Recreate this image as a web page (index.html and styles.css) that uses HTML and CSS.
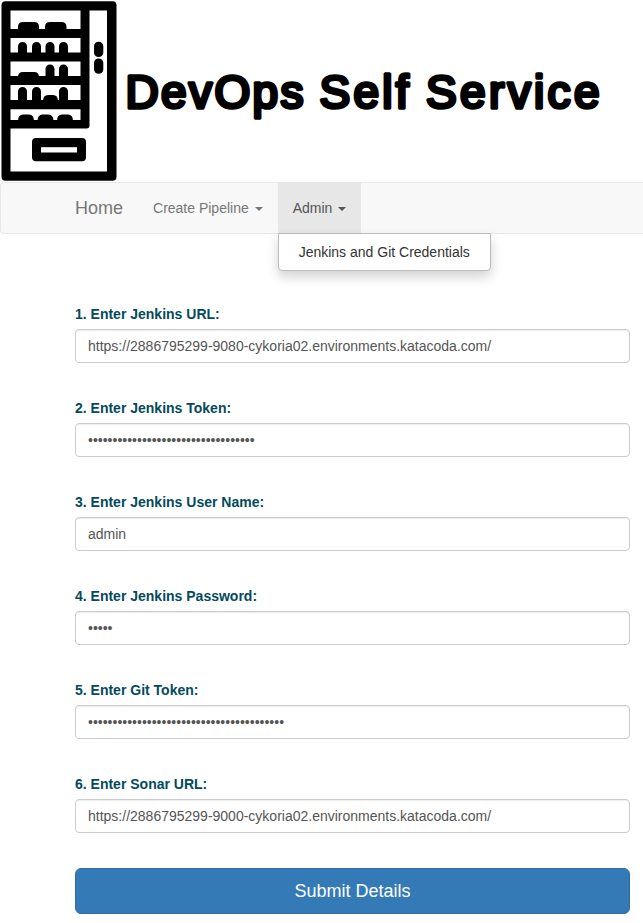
FILE: index.html
```html
<!DOCTYPE html>
<html lang="en">
<head>
<meta charset="utf-8">
<title>DevOps Self Service</title>
<link rel="stylesheet" href="styles.css">
</head>
<body>
<header class="banner">
  <svg class="banner-art" width="643" height="182" viewBox="0 0 643 182" role="img" aria-label="DevOps Self Service">
    <rect x="1.5" y="1.2" width="115" height="179.6" rx="4"/>
    <path class="hole" d="M89.5 10.5H107V171.5H10.5V128.5H86.5Q89.5 128.5 89.5 125.5Z"/>
    <path class="hole" d="M10.5 10.5h70V29h-70zM10.5 38h70v14.5h-70zM10.5 61.5h70V76h-70zM10.5 85h70v15h-70zM10.5 109.3h70V120h-70z"/>
    <path d="M18 30v-3q0-5 5-5h11q5 0 5 5v3zM45 30v-3q0-5 5-5h11.500q5 0 5 5v3z"/>
    <path d="M18 53v-6.500a4.500 4.500 0 0 1 9 0V53zM32 53v-6.500a4.500 4.500 0 0 1 9 0V53zM45.500 53v-6.500a4.500 4.500 0 0 1 9 0V53zM59 53v-6.500a4.500 4.500 0 0 1 9 0V53z"/>
    <path d="M18 77q0-5 5-5h11q5 0 5 5zM45.500 77v-8a4.500 4.500 0 0 1 9 0v8zM59 77v-8a4.500 4.500 0 0 1 9 0v8z"/>
    <path d="M18 101v-9.500a4.500 4.500 0 0 1 9 0v9.500zM32 101v-9.500a4.500 4.500 0 0 1 9 0v9.500zM43 101q0-6 5-6h5q5 0 5 6zM59 101v-9.500a4.500 4.500 0 0 1 9 0v9.500z"/>
    <path d="M18 121q0-6.500 5-6.500h6q5 0 5 6.500zM37.500 121q0-6.500 5-6.500h6q5 0 5 6.500zM57 121q0-6.500 5-6.500h6q5 0 5 6.500z"/>
    <rect x="94" y="41.700" width="9.300" height="15.300" rx="4.600"/>
    <rect x="94" y="58.500" width="9.300" height="15.300" rx="4.600"/>
    <rect x="32" y="138" width="54" height="23.300" rx="4"/>
    <rect class="hole" x="41" y="147.200" width="36" height="5.300"/>
    <g class="banner-title">
      <text x="125.500" y="108" textLength="178" lengthAdjust="spacing">DevOps</text>
      <text x="319.500" y="108" textLength="89" lengthAdjust="spacing">Self</text>
      <text x="426" y="108" textLength="173.500" lengthAdjust="spacing">Service</text>
    </g>
  </svg>
</header>
<nav class="navbar">
  <a class="brand">Home</a>
  <a class="nav-link">Create Pipeline <i class="caret"></i></a>
  <div class="nav-item">
    <a class="nav-link open">Admin <i class="caret"></i></a>
    <div class="menu"><a>Jenkins and Git Credentials</a></div>
  </div>
</nav>
<form class="form">
  <label for="f1">1. Enter Jenkins URL:</label>
  <input id="f1" type="text" value="https://2886795299-9080-cykoria02.environments.katacoda.com/">
  <label for="f2">2. Enter Jenkins Token:</label>
  <input id="f2" type="password" value="0000000000000000000000000000000000">
  <label for="f3">3. Enter Jenkins User Name:</label>
  <input id="f3" type="text" value="admin">
  <label for="f4">4. Enter Jenkins Password:</label>
  <input id="f4" type="password" value="00000">
  <label for="f5">5. Enter Git Token:</label>
  <input id="f5" type="password" value="0000000000000000000000000000000000000000">
  <label for="f6">6. Enter Sonar URL:</label>
  <input id="f6" type="text" value="https://2886795299-9000-cykoria02.environments.katacoda.com/">
  <button type="button">Submit Details</button>
</form>
</body>
</html>
```
FILE: styles.css
```css
* { box-sizing: border-box; }
body {
  margin: 0;
  font: 14px/20px "Liberation Sans", Arial, sans-serif;
  color: #333;
  background: #fff;
  overflow: hidden;
}
.banner { height: 182px; }
.banner-art { display: block; }
.hole { fill: #fff; }
.banner-title {
  font-family: "Liberation Sans", Arial, sans-serif;
  font-size: 46px;
  stroke: #000;
  stroke-width: 3.6px;
  stroke-linejoin: round;
  stroke-linecap: round;
}
.navbar {
  display: flex;
  height: 52px;
  padding-left: 59px;
  border: 1px solid #e7e7e7;
  border-right: 0;
  border-radius: 4px 0 0 4px;
  background: #f8f8f8;
}
.brand { padding: 15px; font-size: 18px; color: #777; }
.nav-link {
  display: block;
  height: 50px;
  padding: 15px;
  color: #777;
  white-space: nowrap;
}
.nav-link.open { color: #555; background: #e7e7e7; }
.caret {
  display: inline-block;
  margin-left: 2px;
  vertical-align: middle;
  border-top: 4px solid;
  border-left: 4px solid transparent;
  border-right: 4px solid transparent;
}
.nav-item { position: relative; }
.menu {
  position: absolute;
  top: 100%;
  left: 0;
  padding: 8px 20px;
  white-space: nowrap;
  background: #fff;
  border: 1px solid #bbb;
  border-radius: 0 0 4px 4px;
  box-shadow: 0 6px 12px rgba(0, 0, 0, .175);
}
.form { margin: 70px 13px 0 75px; }
label {
  display: block;
  margin-bottom: 5px;
  font-weight: 700;
  color: #044a5c;
}
input {
  display: block;
  width: 100%;
  height: 34px;
  margin: 0 0 35px;
  padding: 6px 12px;
  font: inherit;
  color: #555;
  background: #fff;
  border: 1px solid #ccc;
  border-radius: 4px;
  box-shadow: inset 0 1px 1px rgba(0, 0, 0, .075);
}
button {
  display: block;
  width: 100%;
  height: 46px;
  padding: 0;
  font: 18px/24px "Liberation Sans", Arial, sans-serif;
  color: #fff;
  background: #337ab7;
  border: 1px solid #2e6da4;
  border-radius: 6px;
}
```
